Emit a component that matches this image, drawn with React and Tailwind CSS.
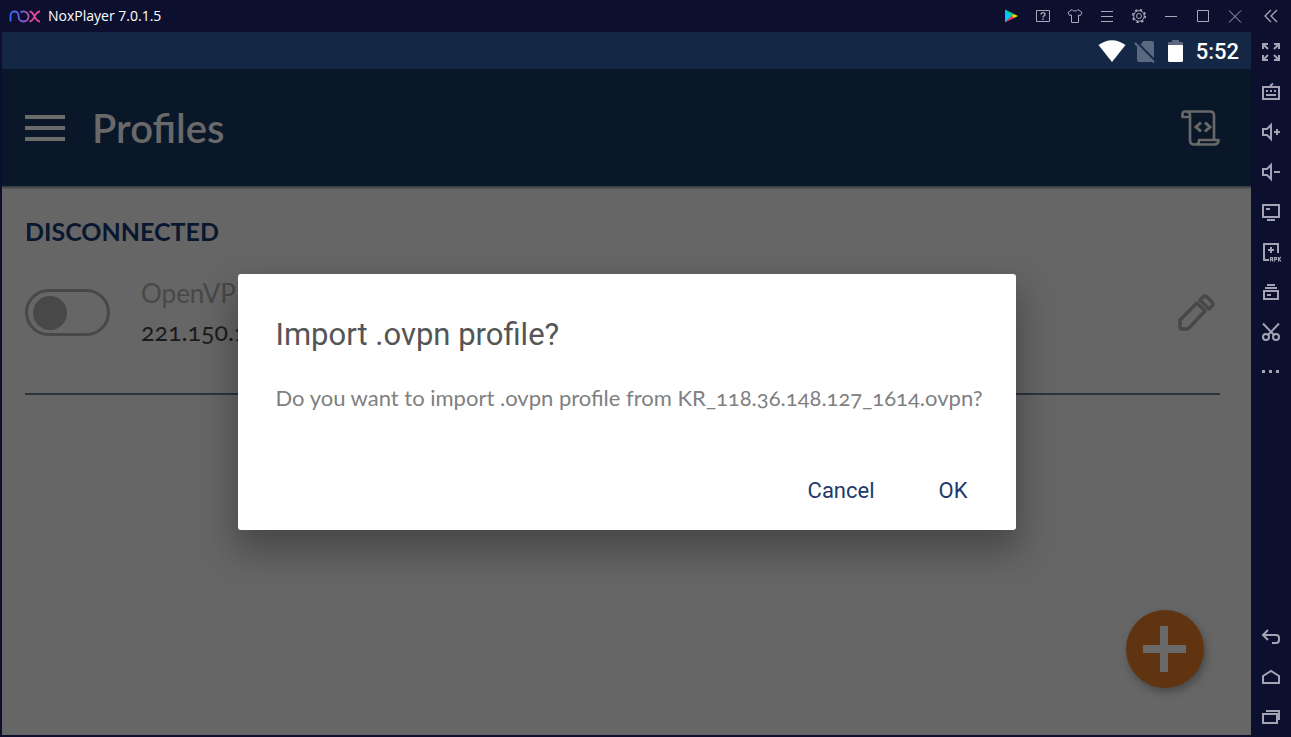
import React from 'react';

const TitleButton = ({ label, children }) => (
  <button type="button" aria-label={label} className="flex h-8 w-8 items-center justify-center">
    <svg width="18" height="18" viewBox="0 0 18 18" fill="none" stroke="#a9a9b8" strokeWidth="1">
      {children}
    </svg>
  </button>
);

const SideButton = ({ label, children }) => (
  <button type="button" aria-label={label} className="flex h-10 w-10 items-center justify-center">
    <svg width="20" height="20" viewBox="0 0 20 20" fill="none" stroke="#a3a3b5" strokeWidth="2">
      {children}
    </svg>
  </button>
);

const NoxLogo = () => (
  <svg width="31" height="14" viewBox="0 0 31 14" fill="none" strokeWidth="1.800" aria-hidden="true">
    <defs>
      <linearGradient id="nox" x1="0" y1="0" x2="31" y2="0" gradientUnits="userSpaceOnUse">
        <stop offset="0" stopColor="#2f6df6" />
        <stop offset="0.5" stopColor="#8a5ad0" />
        <stop offset="0.7" stopColor="#e0489c" />
        <stop offset="1" stopColor="#f0409a" />
      </linearGradient>
    </defs>
    <path
      d="M1.500 12.500V6.500a4 4 0 0 1 8 0v1a5 5 0 0 0 10 0a5 5 0 0 0-8-4M20.500 2.500c5.500 0 4.500 10 10.500 10M31 2.500c-6 0-5 10-10.500 10"
      stroke="url(#nox)"
    />
  </svg>
);

const TitleBar = () => (
  <header className="flex h-8 items-center justify-between pl-[9px]">
    <div className="flex items-center gap-2">
      <NoxLogo />
      <span className="font-['Open_Sans',sans-serif] text-sm text-white">NoxPlayer 7.0.1.5</span>
    </div>
    <div className="flex items-center">
      <button type="button" aria-label="Play store" className="flex h-8 w-8 items-center justify-center">
        <svg width="14" height="14" viewBox="0 0 14 14">
          <path d="M1 0.500V13.500L8 7Z" fill="#00c3ff" />
          <path d="M1 0.500L10 5L7.500 7Z" fill="#00e08a" />
          <path d="M1 13.500L10 9L7.500 7Z" fill="#f5364a" />
          <path d="M10 5L14 7L10 9L7.500 7Z" fill="#ffd000" />
        </svg>
      </button>
      <TitleButton label="Help">
        <path d="M2.500 3.500h13v11h-13z" />
        <path d="M7 7.500c0-2.500 4-2.500 4 0c0 1.500-2 1-2 3M9 11.500v1.500" strokeWidth="1.400" />
      </TitleButton>
      <TitleButton label="Theme">
        <path d="M6 2.500L2 5.500L3.500 8.500L5.500 8V15.500H12.500V8L14.500 8.500L16 5.500L12 2.500C11 4.500 7 4.500 6 2.500Z" />
      </TitleButton>
      <TitleButton label="Menu">
        <path d="M3 4.500h12M3 9.500h12M3 14.500h12" />
      </TitleButton>
      <TitleButton label="Settings">
        <circle cx="9" cy="9" r="2.500" />
        <circle cx="9" cy="9" r="5.300" />
        <circle cx="9" cy="9" r="6.300" strokeWidth="1.600" strokeDasharray="2.400 2.550" />
      </TitleButton>
      <TitleButton label="Minimize">
        <path d="M3 9.500h12" />
      </TitleButton>
      <TitleButton label="Maximize">
        <path d="M3.500 3.500h11v11h-11z" />
      </TitleButton>
      <TitleButton label="Close">
        <path d="M3 3.500l12 12M15 3.500l-12 12" />
      </TitleButton>
      <button type="button" aria-label="Collapse" className="flex h-8 w-10 items-center justify-center">
        <svg width="16" height="16" viewBox="0 0 16 16" fill="none" stroke="#a9a9b8" strokeWidth="1.300">
          <path d="M8 2L2 8L8 14M14 2L8 8L14 14" />
        </svg>
      </button>
    </div>
  </header>
);

const SideBar = () => (
  <aside className="flex w-10 shrink-0 flex-col justify-between">
    <div>
      <SideButton label="Full screen">
        <path d="M2 7V2h5M2 2l5 5M13 2h5v5M18 2l-5 5M2 13v5h5M2 18l5-5M18 13v5h-5M18 18l-5-5" />
      </SideButton>
      <SideButton label="Keyboard">
        <path d="M2 5h16v12H2zM5 13h10M5 9h2M9 9h2M13 9h2" />
        <path d="M9 4l3-2.500" />
      </SideButton>
      <SideButton label="Volume up">
        <path d="M2 7h4l4-4v14l-4-4H2zM13 10h6M16 7v6" />
      </SideButton>
      <SideButton label="Volume down">
        <path d="M2 7h4l4-4v14l-4-4H2zM13 10h6" />
      </SideButton>
      <SideButton label="Virtual screen">
        <path d="M2 3h16v12H2zM6 18h8M5 7h4" />
      </SideButton>
      <SideButton label="Install APK">
        <path d="M17 11V2H3v16h5M7 8h6M10 5v6" />
        <path
          d="M9.500 19.500v-4h2v4M9.500 17.500h2M13.500 19.500v-4h2v2h-2M17.500 15V19.500M20 15l-2 2l2 2.500"
          strokeWidth="1.200"
        />
      </SideButton>
      <SideButton label="Multi-instance">
        <path d="M3 9h14v8H3zM6 13h4M4 6h12M6 3h8" />
      </SideButton>
      <SideButton label="Screenshot">
        <path d="M2 1.500l11.500 12M18 1.500L6.500 13.500" />
        <circle cx="5" cy="15" r="3" />
        <circle cx="15" cy="15" r="3" />
      </SideButton>
      <SideButton label="More">
        <path d="M1 9.500h3M8 9.500h3M15 9.500h3" strokeWidth="3" />
      </SideButton>
    </div>
    <div>
      <SideButton label="Back">
        <path d="M7 3L2 8l5 5M2 8h13q3 0 3 3v2q0 3-3 3h-4" />
      </SideButton>
      <SideButton label="Home">
        <path d="M2 9l8-5l8 5v7H2z" />
      </SideButton>
      <SideButton label="Recent apps">
        <path d="M2 7h14v9H2zM5 4h13v9" />
      </SideButton>
    </div>
  </aside>
);

const StatusBar = () => (
  <div className="flex h-[37px] items-center justify-end bg-[#142846] pr-3 pt-0.5">
    <svg width="28" height="24" viewBox="0 0 28 24" fill="white" className="mr-2">
      <path d="M14 22L0.500 5Q14-4.500 27.500 5Z" />
    </svg>
    <svg width="22" height="24" viewBox="0 0 22 24" className="mr-3">
      <path d="M9.500 1H18Q20 1 20 3V18L6.500 4.500ZM3 4.500L20 21Q19 22 18 22H5Q3 22 3 20Z" fill="#5a6880" />
      <path d="M1 3L20 22.500" stroke="#5a6880" strokeWidth="2" />
    </svg>
    <svg width="16" height="24" viewBox="0 0 16 24" className="mr-3">
      <path d="M0 3Q0 2 1 2H4V0H11V2H14Q15 2 15 3V6H0Z" fill="#5a6880" />
      <path d="M0 5H15V20.500Q15 22 13.500 22H1.500Q0 22 0 20.500Z" fill="white" />
    </svg>
    <span className="font-[Roboto,sans-serif] text-[22px] font-medium leading-8 text-white">5:52</span>
  </div>
);

const AppBar = () => (
  <div className="flex h-[118px] items-center justify-between border-b border-[#333d49] bg-[#0a1729] pl-[23px] pr-[31px] shadow-[0_1px_2px_rgba(0,0,0,0.4)]">
    <div className="flex items-center gap-[26px]">
      <button type="button" aria-label="Open menu">
        <svg width="41" height="28" viewBox="0 0 41 28" stroke="#6b6b6b" strokeWidth="4">
          <path d="M0 3h40M0 14h40M0 25h40" />
        </svg>
      </button>
      <h1 className="font-[Lato,sans-serif] text-[40px] font-semibold leading-none text-[#696969]">Profiles</h1>
    </div>
    <button type="button" aria-label="Log">
      <svg width="39" height="36" viewBox="0 0 39 36" fill="none" stroke="#696969" strokeWidth="2.600">
        <path
          d="M9 7H1.500V4Q1.500 1.500 4 1.500H29Q33 1.500 33 5.500V29M5 1.500Q9 1.500 9 5.500V30Q9 34.500 13.500 34.500H33Q37.500 34.500 37.500 30H18V31Q18 34.500 14 34.500"
          strokeLinejoin="round"
        />
        <path d="M20 12.500l-5 4.500l5 4.500M24 12.500l5 4.500l-5 4.500" strokeWidth="3" />
      </svg>
    </button>
  </div>
);

const ProfileRow = () => (
  <div className="flex h-[121px] items-start border-b-2 border-[#2c3442]">
    <label className="mt-[15px] flex h-[47px] w-[85px] shrink-0 cursor-pointer items-center rounded-full border-[3px] border-[#484848] pl-[5px]">
      <input type="checkbox" aria-label="Connect profile" className="peer sr-only" />
      <span className="size-[34px] rounded-full bg-[#484848] peer-checked:translate-x-9" />
    </label>
    <div className="ml-[31px] flex-1 font-[Lato,sans-serif] leading-[38px]">
      <p className="text-[26px] leading-[38px] text-[#484848]">OpenVPN Profile</p>
      <p className="text-[25px] leading-[38px] text-[#1b1b1b] oldstyle-nums">221.150.1</p>
    </div>
    <button type="button" aria-label="Edit profile" className="mr-[5px] mt-5">
      <svg width="38" height="38" viewBox="0 0 38 38" fill="none" stroke="#484848" strokeWidth="3.500" strokeLinejoin="round">
        <path d="M3 26L20 9L28 17L12 34Q11 35 9 35H5Q3 35 3 33ZM23 6L26 3Q28 1 30 3L35 8Q37 10 35 12L32 15Z" />
      </svg>
    </button>
  </div>
);

const ImportDialog = () => (
  <div
    role="dialog"
    aria-labelledby="dialog-title"
    className="w-[778px] max-w-full rounded-[3px] bg-white px-[38px] pb-[15px] pt-[37px] shadow-[0_18px_36px_4px_rgba(0,0,0,0.3)]"
  >
    <h2 id="dialog-title" className="font-[Roboto,sans-serif] text-[31px] leading-[48px] text-[#555555]">
      Import .ovpn profile?
    </h2>
    <p className="mt-[23px] whitespace-nowrap font-[Lato,sans-serif] text-[22px] leading-8 text-[#808080] oldstyle-nums">
      Do you want to import .ovpn profile from KR_118.36.148.127_1614.ovpn?
    </p>
    <div className="mt-[53px] flex justify-end gap-10 font-[Roboto,sans-serif] text-[22px] leading-[48px] text-[#1d3a6c]">
      <button type="button" className="px-3">Cancel</button>
      <button type="button" className="pl-3 pr-2.5">OK</button>
    </div>
  </div>
);

export default function App() {
  return (
    <div className="flex min-h-screen flex-col bg-[#0d0f2f]">
      <TitleBar />
      <div className="flex flex-1">
        <main className="relative mb-0.5 ml-0.5 flex min-w-0 flex-1 flex-col bg-[#666666]">
          <StatusBar />
          <AppBar />
          <section className="pl-[23px] pr-[31px] pt-[26px]">
            <h2 className="pb-[25px] font-[Lato,sans-serif] text-[25px] font-bold leading-9 text-[#0a1730]">
              DISCONNECTED
            </h2>
            <ProfileRow />
          </section>
          <button
            type="button"
            aria-label="Add profile"
            className="absolute bottom-[47px] right-[47px] flex size-[78px] items-center justify-center rounded-full bg-[#603410] shadow-[2px_4px_8px_rgba(0,0,0,0.3)]"
          >
            <svg width="44" height="46" viewBox="0 0 44 46" stroke="#696969" strokeWidth="8">
              <path d="M0 23h43M21 0v46" />
            </svg>
          </button>
          <div className="absolute inset-0 flex items-center justify-center pt-[37px]">
            <ImportDialog />
          </div>
        </main>
        <SideBar />
      </div>
    </div>
  );
}
